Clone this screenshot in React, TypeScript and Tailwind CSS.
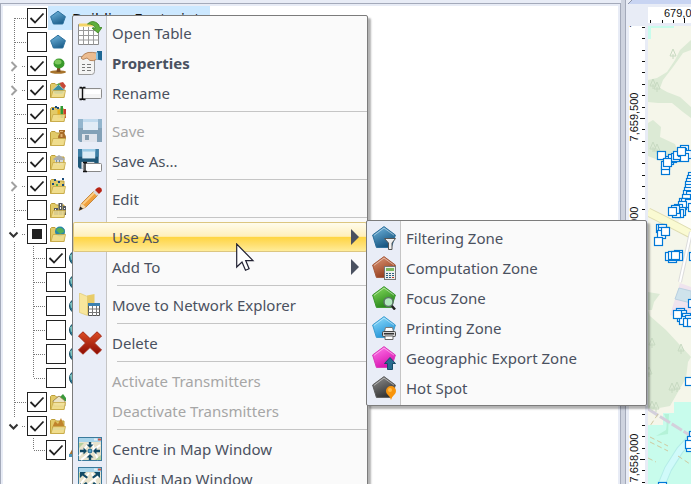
import React from 'react'

type CheckState = 'on' | 'off' | 'mixed'

interface TreeNode {
  name: string
  state: CheckState
  icon: React.ReactNode
  level?: 1 | 2
  expander?: 'open' | 'closed'
  selected?: boolean
  first?: boolean
  last?: boolean
}

interface MenuEntry {
  label: string
  icon?: React.ReactNode
  bold?: boolean
  disabled?: boolean
  active?: boolean
  children?: MenuEntry[]
}

/* ---------- Shared drawings ---------- */

function Pentagon({ id, light, dark, edge, children }: { id: string; light: string; dark: string; edge: string; children?: React.ReactNode }) {
  return (
    <svg viewBox="0 0 24 24" className="size-6 shrink-0">
      <defs>
        <linearGradient id={id} x1="0.2" y1="0" x2="0.7" y2="1">
          <stop offset="0" stopColor={light} />
          <stop offset="1" stopColor={dark} />
        </linearGradient>
      </defs>
      <path d="M12 .6 23.4 9 19.4 21.4H4.4L.6 9z" fill={`url(#${id})`} stroke={edge} />
      <path d="M12 2 22 9.2M12 2 2 9.4" stroke="#fff" strokeOpacity=".45" fill="none" />
      {children}
    </svg>
  )
}

function TreePentagon({ id }: { id: string }) {
  return (
    <svg viewBox="0 0 16 16" className="size-4 shrink-0">
      <defs>
        <linearGradient id={id} x1="0.2" y1="0" x2="0.7" y2="1">
          <stop offset="0" stopColor="#6fb4dc" />
          <stop offset="1" stopColor="#1b5d8a" />
        </linearGradient>
      </defs>
      <path d="M8 1.2 15.4 6.6 12.8 14H3.4L.6 6.6z" fill={`url(#${id})`} stroke="#2c709c" />
    </svg>
  )
}

function Folder({ children }: { children?: React.ReactNode }) {
  return (
    <svg viewBox="0 0 16 16" className="size-4 shrink-0">
      <path d="M.5 15.500V2.500l1-1H5l1.500 1.500H14v12.500z" fill="#e2ca68" stroke="#bc9e3a" />
      {children}
      <path d="M1 15.500 3 8.500h12.500L14 15.500z" fill="#f2e094" fillOpacity=".85" stroke="#c8aa48" strokeWidth=".8" />
    </svg>
  )
}

function Globe() {
  return (
    <svg viewBox="0 0 16 16" className="size-4 shrink-0">
      <circle cx="8" cy="8" r="7.500" fill="#2b7a94" stroke="#174c62" />
      <path d="M1 5q3-2 4 1t-3 4" fill="#7fc4c0" />
    </svg>
  )
}

const treeIcon = (
  <svg viewBox="0 0 16 16" className="size-4 shrink-0">
    <ellipse cx="8" cy="14" rx="8" ry="1.800" fill="#a8742c" />
    <path d="M7.500 8H10l.5 6h-4z" fill="#7a4a20" />
    <ellipse cx="9" cy="5.500" rx="5.500" ry="5" fill="#3a9a2c" />
    <ellipse cx="8" cy="4" rx="3.500" ry="2.500" fill="#7cc85c" />
  </svg>
)

const floppy = (
  <>
    <path d="M0 0h24v23H2l-2-2z" fill="#1f5878" />
    <path d="M0 0h24v9H0z" fill="#3d7fa5" />
    <path d="M5 0h15v11H5z" fill="#dcecf6" />
    <path d="M5 0h15v3H5z" fill="#9ccbe6" />
    <path d="M4 15h15v8H4z" fill="#d8dde2" />
    <path d="M7 16h4v5H7z" fill="#28506a" />
  </>
)

const textBox = (
  <>
    <rect x=".5" y="7.500" width="23" height="10" rx="1" fill="#f4f4f4" stroke="#8c8c8c" />
    <path d="M7 9h15.500v4H7z" fill="#fff" />
    <path d="M1.500 6.500h2l1 1 1-1h2M4.500 7v11M1.500 18.500h2l1-1 1 1h2" fill="none" stroke="#111" strokeWidth="1.400" />
  </>
)

const mapWindow = (
  <>
    <rect x=".5" y=".5" width="23" height="23" fill="#e8e2cc" stroke="#3a7a9c" />
    <path d="M1 1h22v4H1z" fill="#a8d4ea" />
    <path d="M16 1.500h3v2h-3z" fill="#e6eef4" />
    <path d="M20 1.500h3v2h-3z" fill="#d05848" />
    <path d="M1 19 11 6M3 23 22 8M14 6l6 17" stroke="#fff" strokeWidth="2" fill="none" />
    <path d="M1 6h5l-5 5zM17 23l6-5v5z" fill="#b5d0a0" />
  </>
)

/* ---------- Data ---------- */

const treeNodes: TreeNode[] = [
  { name: 'Building Footprints', state: 'on', icon: <TreePentagon id="tp1" />, selected: true, first: true },
  { name: 'Zones', state: 'off', icon: <TreePentagon id="tp2" /> },
  { name: 'Vegetation', state: 'on', icon: treeIcon, expander: 'closed' },
  {
    name: 'Geographic layers', state: 'on', expander: 'closed',
    icon: <Folder><path d="m9 1 4-1 3 4-3 4z" fill="#c84838" /><path d="m2.500 8 6-5.500 6 5.500-2 4h-8z" fill="#3a8fa0" stroke="#d4e4e4" strokeWidth=".6" /><path d="m6 3 3-2 2 2z" fill="#5aa848" /></Folder>,
  },
  {
    name: 'Statistics', state: 'on',
    icon: <Folder><path d="M7.500 4H10v8H7.500z" fill="#e8b020" /><path d="M10.500 0H13v12h-2.500z" fill="#2f9a34" /><path d="M13.500 3H16v9h-2.500z" fill="#c83c30" /><path d="M2 2h2v2H2zM5 0h2v2H5zM7 1h2v2H7z" fill="#1a4c7c" /></Folder>,
  },
  { name: 'Population', state: 'on', icon: <Folder><path d="M9 0h6v2l-1 1q2 2 2 6H8q0-4 2-6L9 2z" fill="#a86c28" /><path d="M10 1h3v1h-3zM10.500 4h2v3h-2z" fill="#e0b070" /></Folder> },
  { name: 'Buildings', state: 'on', icon: <Folder><path d="m3 5 6-4 6 4-1 1H4z" fill="#a8acb0" /><path d="M5 6h8v5H5z" fill="#d4d8da" /><path d="M6 6h1v4H6zM9 6h1v4H9z" fill="#7890a0" /></Folder> },
  {
    name: 'Measurements', state: 'on', expander: 'closed',
    icon: <Folder><path d="M4 1h2v2H4zM8 3h2v2H8zM12 0h2v2h-2zM2 5h2v2H2zM12 6h2v2h-2z" fill="#1a4c7c" /><path d="M6 6h2v2H6z" fill="#5aa848" /></Folder>,
  },
  { name: 'Clutter', state: 'off', icon: <Folder><path d="M4 6h4v7H4zM8.500 1h4v12h-4zM13 4h3v9h-3z" fill="#555a60" /><path d="M10 2h1v2h-1zM10 5h1v2h-1zM5 7h1v2H5zM14 6h1v1h-1z" fill="#fff" /></Folder> },
  { name: 'Maps', state: 'mixed', expander: 'open', icon: <Folder><circle cx="10" cy="5.500" r="5" fill="#2888a8" /><path d="M6 4q2-3 5-2t3 4l-4 2z" fill="#54b058" /></Folder> },
  { name: 'Map 1', state: 'on', level: 2, icon: <Globe /> },
  { name: 'Map 2', state: 'off', level: 2, icon: <Globe /> },
  { name: 'Map 3', state: 'off', level: 2, icon: <Globe /> },
  { name: 'Map 4', state: 'off', level: 2, icon: <Globe /> },
  { name: 'Map 5', state: 'off', level: 2, icon: <Globe /> },
  { name: 'Map 6', state: 'off', level: 2, last: true, icon: <Globe /> },
  { name: 'Land use', state: 'on', icon: <Folder><path d="m10 3 3-3 3 4v3h-6z" fill="#3a9a3c" /><path d="m3 7 6-5 6 5v5H4z" fill="#ece4c8" stroke="#907848" strokeWidth=".8" /></Folder> },
  { name: 'Terrain', state: 'on', expander: 'open', last: true, icon: <Folder><path d="m2 10 3-7 3 3 3-6 4 10z" fill="#c0842c" /><path d="M2 10h13v2H2z" fill="#8cb8a8" /></Folder> },
  {
    name: 'Elevation', state: 'on', level: 2, last: true, first: true,
    icon: (
      <svg viewBox="0 0 16 16" className="size-4 shrink-0">
        <path d="m0 13 5-9 4 4 3-5 4 10z" fill="#a8702c" />
        <path d="M0 12h16v3H0z" fill="#4c94b8" />
      </svg>
    ),
  },
]

const zoneMenu: MenuEntry[] = [
  {
    label: 'Filtering Zone',
    icon: (
      <Pentagon id="filtering" light="#6db3dd" dark="#0f4c77" edge="#2a6d99">
        <path d="M12.500 12.500h11L20 17v6.500h-3.500V17z" fill="#f0f0f0" stroke="#555" />
      </Pentagon>
    ),
  },
  {
    label: 'Computation Zone',
    icon: (
      <Pentagon id="computation" light="#dc9474" dark="#8c3414" edge="#a4583a">
        <rect x="12.500" y="10.500" width="11" height="13" fill="#eef0ee" stroke="#777" />
        <path d="M14 12h8v3h-8z" fill="#7ab85c" />
        <path d="M14 17h2v1h-2zM17 17h2v1h-2zM20 17h2v1h-2zM14 19h2v1h-2zM17 19h2v1h-2zM20 19h2v1h-2zM14 21h2v1h-2zM17 21h2v1h-2z" fill="#2c6080" />
        <path d="M20 21h2v1h-2z" fill="#c03828" />
      </Pentagon>
    ),
  },
  {
    label: 'Focus Zone',
    icon: (
      <Pentagon id="focus" light="#84dc5c" dark="#1e7c14" edge="#3a962c">
        <path d="m19 19 4 4.500" stroke="#222" strokeWidth="2.500" />
        <circle cx="16.500" cy="16" r="4.500" fill="#b4e8c0" stroke="#5c7468" strokeWidth="1.500" />
      </Pentagon>
    ),
  },
  {
    label: 'Printing Zone',
    icon: (
      <Pentagon id="printing" light="#8cdcfc" dark="#1a8cd4" edge="#3c9cd0">
        <path d="M13.500 11.500h7l1 4h-9z" fill="#fff" stroke="#777" />
        <rect x="10.500" y="15.500" width="13" height="5" rx="1" fill="#d4d4d4" stroke="#444" />
        <path d="M12 17h10v1.500H12z" fill="#333" />
        <path d="M13 20h8v3.500h-8z" fill="#fff" stroke="#666" />
      </Pentagon>
    ),
  },
  {
    label: 'Geographic Export Zone',
    icon: (
      <Pentagon id="export" light="#ff74e8" dark="#d40cac" edge="#d838b8">
        <path d="m18 11.500 5.500 6H20.500v6h-5v-6h-3z" fill="#286c90" stroke="#174c6a" />
      </Pentagon>
    ),
  },
  {
    label: 'Hot Spot',
    icon: (
      <Pentagon id="hotspot" light="#8c8c8c" dark="#2c2c2c" edge="#5c5c5c">
        <path d="M19 24q-.5-3-3.500-5.500a5 5 0 1 1 7 0Q19.500 21 19 24z" fill="#f8940c" />
        <circle cx="18" cy="14" r="2" fill="#ffbc4c" />
      </Pentagon>
    ),
  },
]

// Entries are grouped; a separator is drawn between groups
const menuGroups: MenuEntry[][] = [
  [
    {
      label: 'Open Table',
      icon: (
        <svg viewBox="0 0 24 24" className="size-6 shrink-0">
          <path d="M.5 3.500h20v20H.5z" fill="#fff" stroke="#8c8c8c" />
          <path d="M1 2.500h14v3H1z" fill="#f4d468" />
          <path d="M.5 9.500h20M.5 14.500h20M.5 19h20M5.500 6v17.500M10.500 6v17.500M15.500 6v17.500" stroke="#9a9a9a" />
          <path d="M9.500 3Q14-1.500 19 2q2.500 2 2.500 4.500H24L20 12l-6-5h3.500Q15 2.500 9.500 3z" fill="#5fae3c" stroke="#3c8424" strokeWidth=".8" />
        </svg>
      ),
    },
    {
      label: 'Properties',
      bold: true,
      icon: (
        <svg viewBox="0 0 24 24" className="size-6 shrink-0">
          <path d="M.5 5.500h16v15q0 3-3 3H.5z" fill="#f4f4f4" stroke="#9a9a9a" />
          <path d="M4 13.500h3M9 13.500h4M4 16.500h3M9 16.500h4M4 19.500h3M9 19.500h4" stroke="#777" />
          <path d="M3 7q3-5 7-5.500 4-.5 9 .5v6q-3 2.500-7 1.500L9 7 5 8.500z" fill="#ecbc90" stroke="#a87448" strokeWidth=".8" />
          <path d="M19 0 24-1v10.500l-5-1z" fill="#1f6894" />
          <path d="M18 1.500h2v7h-2z" fill="#8cc4e4" />
        </svg>
      ),
    },
    { label: 'Rename', icon: <svg viewBox="0 0 24 24" className="size-6 shrink-0">{textBox}</svg> },
  ],
  [
    { label: 'Save', disabled: true, icon: <svg viewBox="0 0 24 24" className="size-6 shrink-0 opacity-50">{floppy}</svg> },
    {
      label: 'Save As...',
      icon: (
        <svg viewBox="0 0 24 24" className="size-6 shrink-0">
          <g transform="scale(.86)">{floppy}</g>
          <rect x="5.500" y="14.500" width="18" height="8" rx="1" fill="#fff" stroke="#888" />
          <path d="M5 13.500h4M7 13.500v9M5 22.500h4" stroke="#111" strokeWidth="1.400" />
        </svg>
      ),
    },
  ],
  [
    {
      label: 'Edit',
      icon: (
        <svg viewBox="0 0 24 24" className="size-6 shrink-0">
          <path d="M1 23.500 3.500 16.500 16 4l4 4L8 20z" fill="#f0a03c" stroke="#b06c1c" strokeWidth=".7" />
          <path d="M5 17 17 5" stroke="#fccc84" strokeWidth="1.800" />
          <path d="M1 23.500 3.500 16.500 8 20z" fill="#f0d8b0" />
          <path d="m1 23.500 1.300-4 2.700 2.200z" fill="#222" />
          <path d="m15 5 2-2 4 4-2 2z" fill="#d8d8d8" />
          <path d="m17 3 2-2q2.500-1.500 4 .2t.5 3.300L21 7z" fill="#b82414" />
        </svg>
      ),
    },
  ],
  [
    { label: 'Use As', active: true, children: zoneMenu },
    { label: 'Add To', children: [] },
  ],
  [
    {
      label: 'Move to Network Explorer',
      icon: (
        <svg viewBox="0 0 24 24" className="size-6 shrink-0">
          <path d="M9 2.500 16.500 1v18L9 21z" fill="#e8cc68" />
          <path d="m1.500 0 8 3.500v19l-8-3z" fill="#f8e69c" stroke="#dcc468" strokeWidth=".6" />
          <path d="M10.500 10.500h11v12h-11z" fill="#fff" stroke="#555" />
          <path d="M10 10h12v3H10z" fill="#3c80b0" />
          <path d="M10.500 16h11M10.500 19.500h11M14.500 13v10M18.500 13v10" stroke="#777" />
        </svg>
      ),
    },
  ],
  [
    {
      label: 'Delete',
      icon: (
        <svg viewBox="0 0 24 24" className="size-6 shrink-0">
          <defs>
            <linearGradient id="cross" x1="0" y1="0" x2="0" y2="1">
              <stop offset="0" stopColor="#dc4c24" />
              <stop offset="1" stopColor="#8c0c04" />
            </linearGradient>
          </defs>
          <path d="M5 .8 12 7.500l7-6.700L23.500 5l-7 7 7 7-4.500 4.200-7-6.700-7 6.700L.5 19l7-7-7-7z" fill="url(#cross)" stroke="#a42814" strokeLinejoin="round" />
        </svg>
      ),
    },
  ],
  [
    { label: 'Activate Transmitters', disabled: true },
    { label: 'Deactivate Transmitters', disabled: true },
  ],
  [
    {
      label: 'Centre in Map Window',
      icon: (
        <svg viewBox="0 0 24 24" className="size-6 shrink-0">
          {mapWindow}
          <path d="M12 11 8.500 7.500h2.300V5h2.400v2.500h2.300zM12 17l3.500 3.500h-2.300V23h-2.400v-2.500H8.500zM9 14l-3.500-3.500v2.300H2v2.400h3.500v2.300zM15 14l3.500-3.500v2.300H22v2.400h-3.500v2.300z" fill="#124a66" />
          <circle cx="12" cy="14" r="2" fill="#58a4cc" stroke="#1f688c" />
        </svg>
      ),
    },
    {
      label: 'Adjust Map Window',
      icon: (
        <svg viewBox="0 0 24 24" className="size-6 shrink-0">
          {mapWindow}
          <path d="M2 5h6L6 7l4 3-1.500 1.500-4-3L2 11zM22 5h-6l2 2-4 3 1.500 1.500 4-3L22 11zM2 22v-6l2 2 4-3 1.500 1.500-4 3L8 22zM22 22v-6l-2 2-4-3-1.500 1.500 4 3L16 22z" fill="#124a66" />
        </svg>
      ),
    },
  ],
]

// Site positions on the map, in map pixels; later ones lie on top
const sites: [number, number][] = [
  [21, 134], [24, 132], [27, 131], [29, 129], [36, 123], [34, 126], [39, 128], [36, 131], [33, 125], [13, 129], [17, 144], [17, 139], [19, 136],
  [44, 150], [43, 153], [42, 156], [41, 159], [41, 162], [40, 165], [39, 168], [42, 169], [38, 172], [35, 176], [37, 176], [41, 177], [44, 181],
  [34, 179], [30, 182], [33, 185], [31, 187], [28, 187], [27, 183], [24, 185],
  [12, 202], [14, 202], [14, 205], [13, 208], [17, 205], [10, 215],
  [24, 232], [21, 230], [24, 229], [30, 228], [30, 230], [27, 229], [45, 230], [44, 277],
  [32, 286], [34, 288], [33, 291], [38, 291], [35, 294], [41, 293], [39, 296], [43, 296], [29, 288],
  [41, 355], [45, 409], [43, 414], [42, 421], [41, 418], [14, 460],
]

const trees: [number, number][] = [[25, 28], [5, 58], [9, 61], [5, 121], [9, 123], [4, 317], [33, 323], [1, 346], [24, 362], [29, 361], [4, 380], [8, 381]]

/* ---------- Tree ---------- */

function Branches({ node }: { node: TreeNode }) {
  const child = node.level === 2
  const orphan = child && node.first
  return (
    <svg className={child ? 'h-6 w-[43px] shrink-0' : 'h-6 w-6 shrink-0'} fill="none">
      <g stroke="#777" strokeDasharray="1 1">
        {!orphan && <path d={node.first ? 'M11.500 12v12' : !child && node.last ? 'M11.500 0v4' : 'M11.500 0v24'} />}
        {child && <path d={node.last ? 'M30.500 0v12' : 'M30.500 0v24'} />}
        {child ? <path d="M31 12.500h12" /> : <path d={node.expander ? 'M19 12.500h4' : 'M12 12.500h12'} />}
      </g>
      {node.expander && <path d="M4 5h14v14H4z" fill="#fff" />}
      {node.expander === 'closed' && <path d="m8.500 8 4.500 4.500L8.500 17" stroke="#a0a0a0" strokeWidth="2" />}
      {node.expander === 'open' && <path d="m6.500 10.500 4 4 4-4" stroke="#333" strokeWidth="2" />}
    </svg>
  )
}

function TreeRow({ node }: { node: TreeNode }) {
  return (
    <li className="flex h-6 items-center">
      <Branches node={node} />
      <span className="grid size-5 shrink-0 place-items-center">
        <input
          type="checkbox"
          aria-label={node.name}
          defaultChecked={node.state === 'on'}
          className="col-start-1 row-start-1 size-5 appearance-none border border-[#222] bg-white"
        />
        <svg viewBox="0 0 20 20" className="pointer-events-none col-start-1 row-start-1 size-5" fill="none">
          {node.state === 'on' && <path d="m3.500 10 4.500 4.500L16.500 5.500" stroke="#222" strokeWidth="1.800" />}
          {node.state === 'mixed' && <path d="M5 5h10v10H5z" fill="#222" />}
        </svg>
      </span>
      <span className={node.selected ? 'ml-px flex h-6 w-[162px] items-center gap-1.5 bg-[#cce8ff] pl-0.5' : 'ml-px flex h-6 items-center pl-0.5'}>
        {node.icon}
        {node.selected && <span className="text-[15px] leading-6 whitespace-nowrap text-[#111]">{node.name}</span>}
      </span>
    </li>
  )
}

/* ---------- Context menu ---------- */

const menuPanel =
  'absolute rounded-xs border border-[#7c7c7c] bg-[linear-gradient(to_right,#e9edf7_33px,#c5c5c5_33px,#c5c5c5_34px,#fafafa_34px)] py-0.5 shadow-[3px_3px_2px_rgba(0,0,0,0.3)]'

function MenuItem({ entry }: { entry: MenuEntry }) {
  return (
    <li className="relative">
      <button
        disabled={entry.disabled}
        className={
          'flex h-[30px] w-full items-center gap-2.5 pr-2 pl-[5px] text-left text-[15px] whitespace-nowrap ' +
          (entry.disabled ? 'text-[#a6a6a6] ' : 'text-[#4a5160] ') +
          (entry.bold ? 'font-bold ' : '') +
          (entry.active
            ? 'rounded-xs bg-[linear-gradient(to_bottom,#fffdf0_0%,#ffefba_48%,#ffd540_50%,#ffdf70_75%,#ffefa0_100%)] inset-ring inset-ring-[#dcc680]'
            : '')
        }
      >
        {entry.icon || <span className="size-6 shrink-0" />}
        <span className="grow">{entry.label}</span>
        {entry.children && (
          <svg viewBox="0 0 8 16" className="h-4 w-2 shrink-0">
            <path d="M0 0 8 8 0 16z" fill="#4a5160" />
          </svg>
        )}
      </button>
      {entry.active && entry.children && (
        <ul className={menuPanel + ' -top-0.5 left-full -ml-px w-[281px]'}>
          {entry.children.map((child) => (
            <MenuItem key={child.label} entry={child} />
          ))}
        </ul>
      )}
    </li>
  )
}

function ContextMenu() {
  return (
    <div className={menuPanel + ' top-[15px] left-[72px] z-10 w-[296px]'}>
      {menuGroups.map((group, i) => (
        <React.Fragment key={i}>
          {i > 0 && <hr className="mt-[3px] mb-1 ml-11 border-[#c5c5c5]" />}
          <ul>
            {group.map((entry) => (
              <MenuItem key={entry.label} entry={entry} />
            ))}
          </ul>
        </React.Fragment>
      ))}
    </div>
  )
}

/* ---------- Map ---------- */

function VerticalRuler() {
  const labels: [string, number][] = [['7,660,000', 3], ['7,659,500', 117], ['7,659,000', 231], ['7,658,500', 344], ['7,658,000', 458]]
  return (
    <svg className="h-full w-4 shrink-0 bg-white">
      {Array.from({ length: 41 }, (_, i) => {
        const y = Math.round(1 + i * 11.37)
        const major = i % 10 === 8
        return <path key={i} d={`M${major ? 11 : 13} ${y}.5H16`} stroke="#111" />
      })}
      {labels.map(([text, y]) => (
        <text key={text} transform={`translate(9 ${y - 26}) rotate(-90)`} textAnchor="middle" fontSize="11" fill="#111" className="font-['Liberation_Sans',sans-serif]">
          {text}
        </text>
      ))}
    </svg>
  )
}

function MapCanvas() {
  return (
    <svg className="h-full min-w-0 grow bg-[#f5f6ea]" fill="none">
      <path d="M43 14 32 24 27 34 19 46 9 52 0 54V76L10 77H24L35 86 43 92V81L32 71 19 66 12 62 15 54 25 41 35 27 43 24z" fill="#dcead5" />
      <path d="M0 97 5 94 13 101 12 111 27 118 32 131V136L20 138 0 130z" fill="#dcead5" />
      <path d="M0 266 12 268 6 276 4 284 0 284z" fill="#dcead5" />
      <path d="M0 284 2 290 18 304 43 331 40 336 38 352 30 366 22 380 0 384z" fill="#dcead5" />
      <path d="M0 0h26v2H3v11H0z" fill="#c8fcec" />
      <path d="M30 196 44 176V204z" fill="#fdfdf6" />
      <path d="M0 186 20 196 43 208" stroke="#dedcb0" strokeWidth="9" />
      <path d="M0 186 20 196 43 208" stroke="#fafad2" strokeWidth="7" />
      <path d="M43 206 36 238 32 256" stroke="#dcdcdc" strokeWidth="4" />
      <path d="M43 206 36 238 32 256" stroke="#fff" strokeWidth="2" />
      <path d="M32 257 43 261V294L22 289z" fill="#efe4ee" />
      <path d="m31 262 12 3v12l-16-4z" fill="#cfe3ec" stroke="#b8d0e0" />
      <path d="M43 376H26V387H15V399H0V480H43z" fill="#c8fcec" />
      <path d="M16 388q4 8 2 16l-10 6 12-2 1-20z" fill="#b4f2d8" />
      <path d="M13 460 20 443 32 424 44 411" stroke="#b4ece8" strokeWidth="8" />
      <path d="M13 460 20 443 32 424 44 411" stroke="#d0fafa" strokeWidth="6" />
      <path d="M0 383 43 410" stroke="#d4d0dc" strokeWidth="3" strokeDasharray="12 2" />
      <path d="m10 388-8 12M2 411l18 9M2 416l18 9M30 430l12 8M0 432l8 4" stroke="#cfc9a0" strokeDasharray="5 3" />
      {trees.map(([x, y]) => (
        <path key={`${x}-${y}`} d={`M${x} ${y - 5}l-3 7h6zM${x} ${y}v5`} stroke="#c8dac2" />
      ))}
      {sites.map(([x, y]) => (
        <rect key={`${x}-${y}`} x={x - 4 + 0.5} y={y - 4 + 0.5} width="8" height="8" fill="#fff" stroke="#0078d7" strokeWidth="1.200" />
      ))}
    </svg>
  )
}

function MapPanel() {
  return (
    <section className="flex h-full w-16 shrink-0 flex-col">
      <svg className="h-[7px] w-full shrink-0">
        <path d="M5 0h80v4H1z" fill="#c8d4f2" />
        <path d="M5 0 1 4" stroke="#8c94a8" />
      </svg>
      <svg className="ml-[21px] h-4 w-[43px] shrink-0 bg-white">
        <path d="M2.500 13v3M14.500 13v3M25.500 13v3M36.500 11v5" stroke="#111" />
        <text x="16" y="10" fontSize="11" fill="#111" className="font-['Liberation_Sans',sans-serif]">679,000</text>
      </svg>
      <div className="mt-[3px] ml-0.5 flex min-h-0 grow gap-[3px]">
        <VerticalRuler />
        <MapCanvas />
      </div>
    </section>
  )
}

export default function App() {
  return (
    <main className="relative flex h-screen overflow-hidden bg-[#e8ecf6] font-['Noto_Sans','Open_Sans',sans-serif]">
      <section className="mt-[3px] min-w-0 grow border border-b-0 border-[#a4aaba] px-0.5 pt-0.5">
        <ul className="h-full bg-white">
          {treeNodes.map((node) => (
            <TreeRow key={node.name} node={node} />
          ))}
        </ul>
      </section>
      <div className="mr-px w-[5px] shrink-0 border-r border-[#a4aaba] bg-[#ced3df]" />
      <MapPanel />

      <ContextMenu />

      {/* Mouse pointer */}
      <svg viewBox="0 0 19 29" className="pointer-events-none absolute top-[243px] left-[236px] z-20 h-[29px] w-[19px]">
        <path d="M.7 1v23l5.300-5 3.500 8.300 3.600-1.500L9.700 17.600H17z" fill="#fff" stroke="#223" strokeWidth="1.200" />
      </svg>
    </main>
  )
}
